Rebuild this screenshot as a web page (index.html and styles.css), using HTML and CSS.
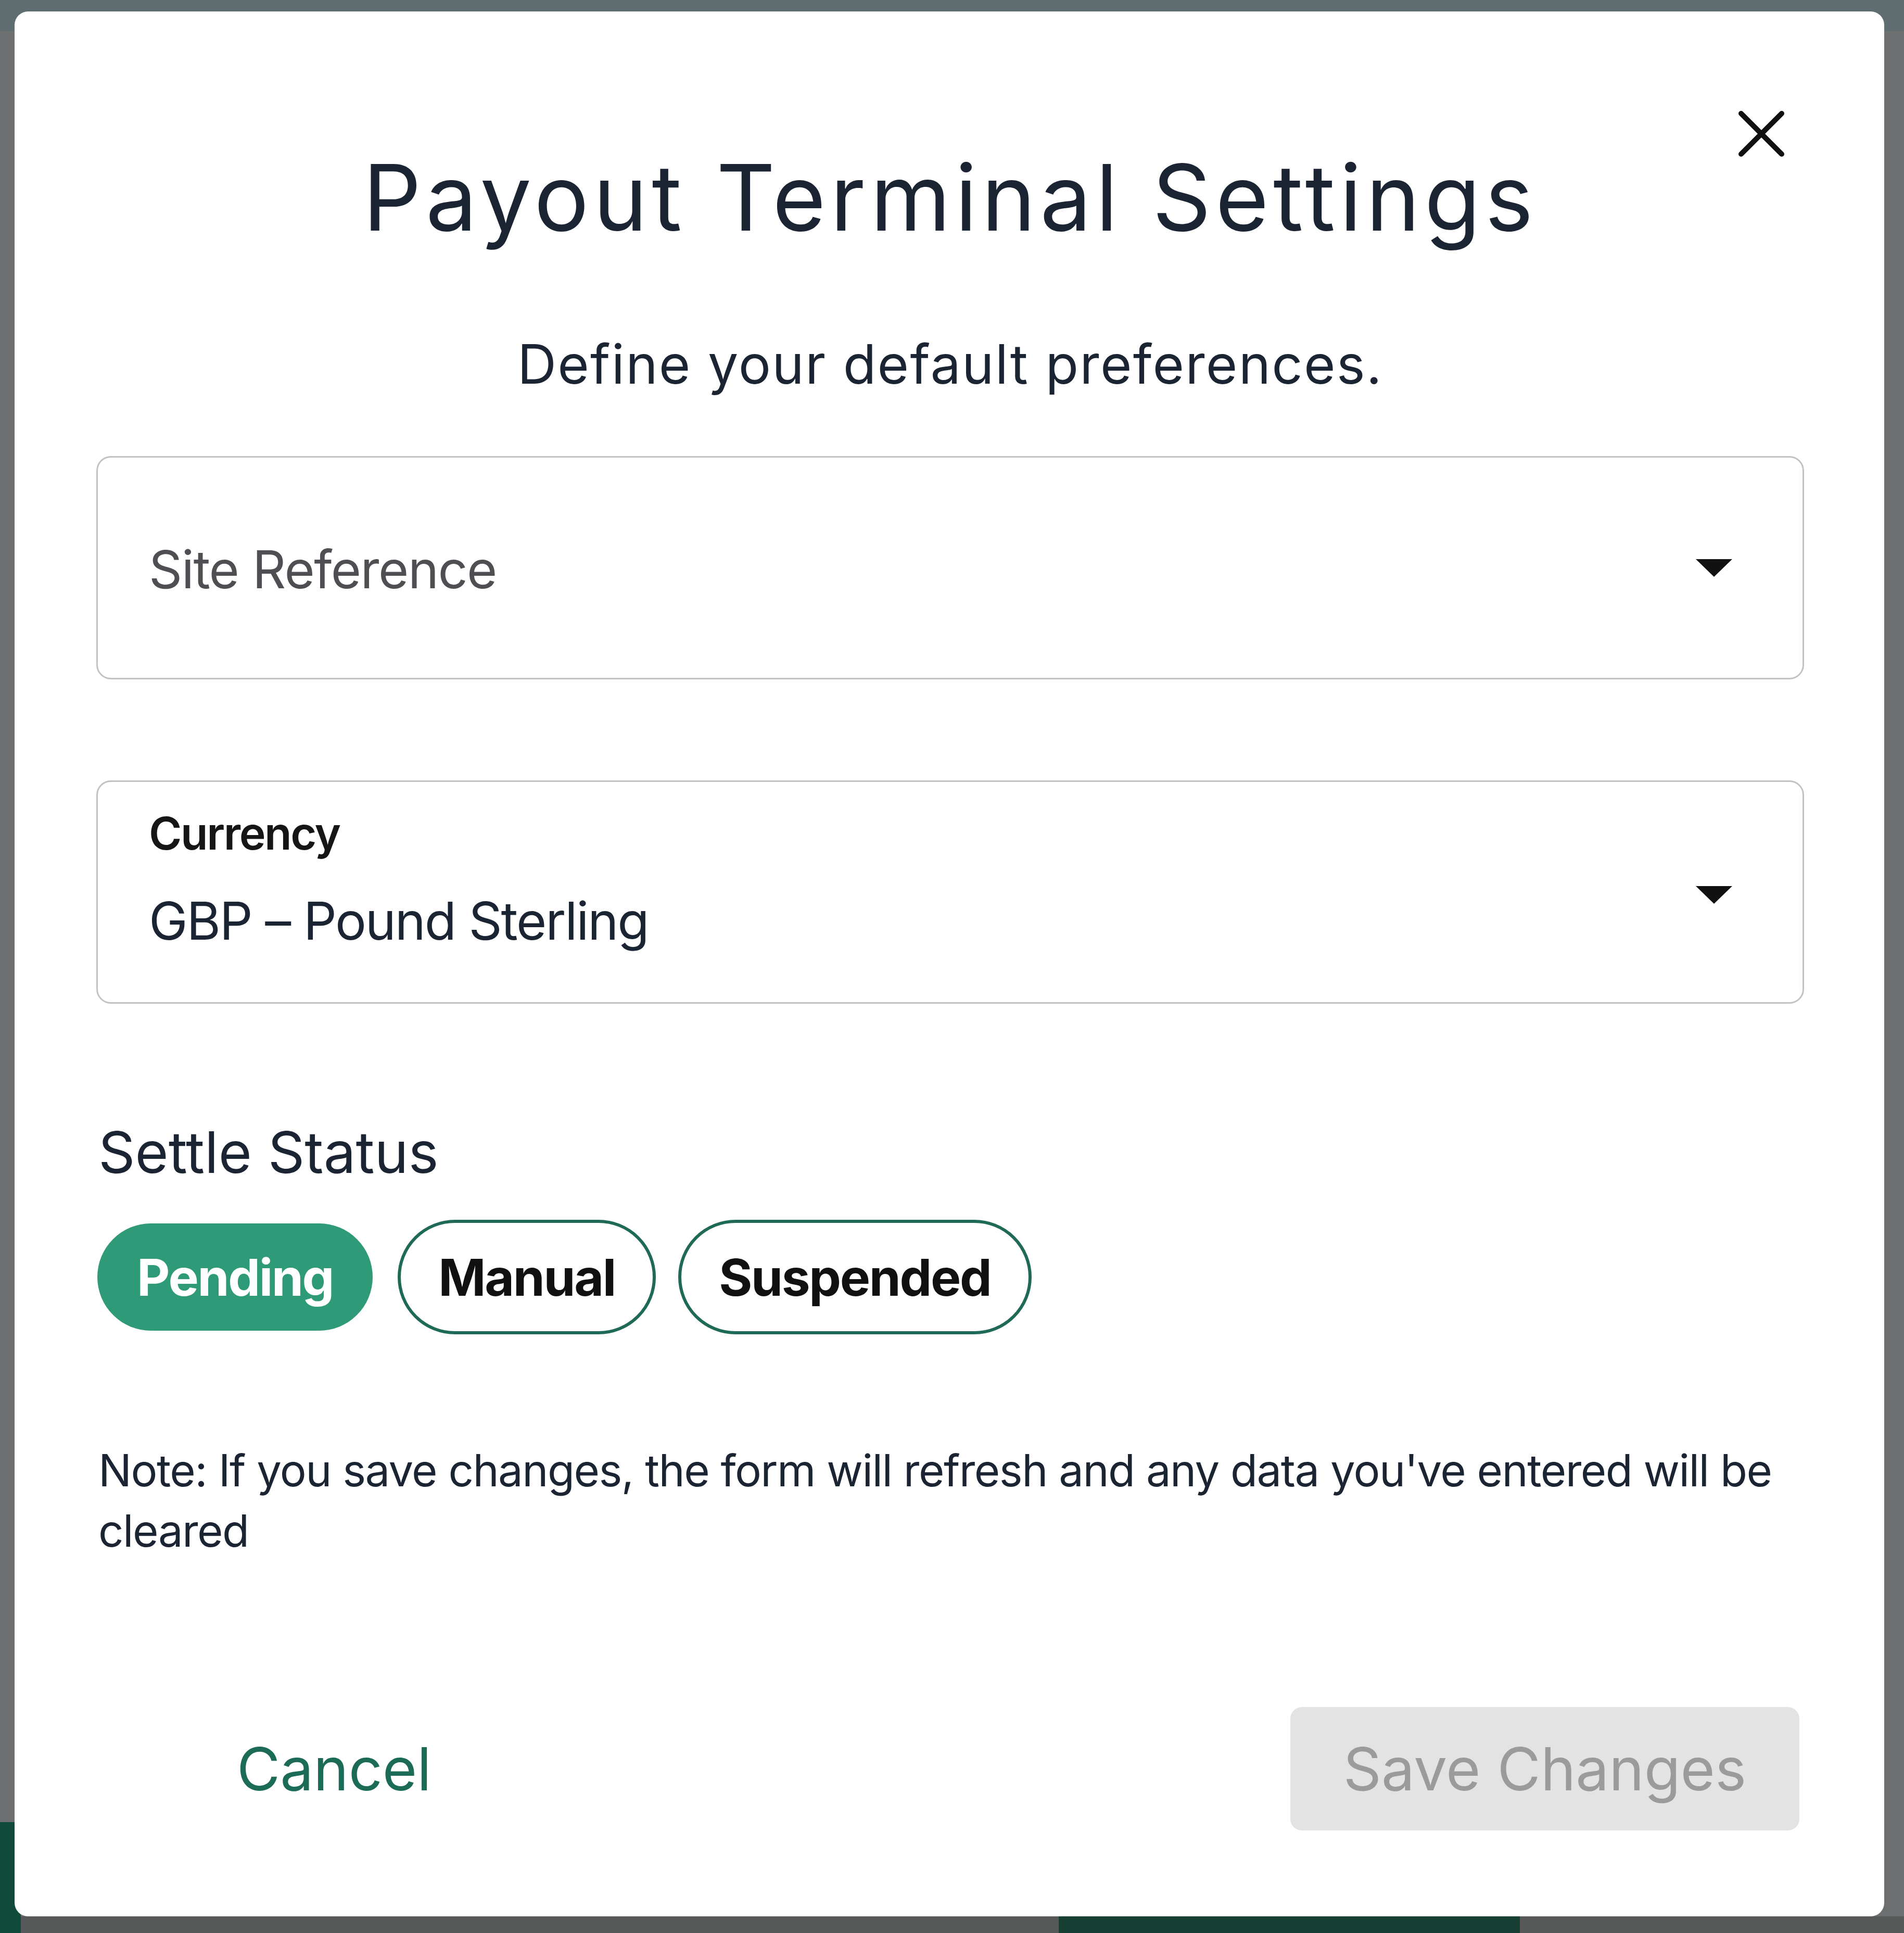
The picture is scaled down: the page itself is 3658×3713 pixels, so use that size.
FILE: index.html
```html
<!DOCTYPE html>
<html lang="en">
<head>
<meta charset="utf-8">
<title>Payout Terminal Settings</title>
<link rel="stylesheet" href="styles.css">
</head>
<body>
<div class="behind">
  <div class="behind-main"></div>
  <div class="behind-bottom">
    <div class="behind-green-left"></div>
    <div class="behind-gap"></div>
    <div class="behind-green-mid"></div>
  </div>
</div>

<div class="modal" role="dialog" aria-labelledby="dlg-title">
  <button class="close" aria-label="Close">
    <svg viewBox="0 0 88 88" width="88" height="88" aria-hidden="true">
      <path d="M5 5 L83 83 M83 5 L5 83" stroke="#111111" stroke-width="10" stroke-linecap="round" fill="none"/>
    </svg>
  </button>

  <h1 class="title" id="dlg-title">Payout Terminal Settings</h1>
  <p class="subtitle">Define your default preferences.</p>

  <div class="field field-empty">
    <span class="field-placeholder">Site Reference</span>
    <svg class="caret" viewBox="0 0 70 34" width="70" height="34" aria-hidden="true"><path d="M0 0 H70 L35 34 Z" fill="#111111"/></svg>
  </div>

  <div class="field field-filled">
    <div class="field-body">
      <span class="field-label">Currency</span>
      <span class="field-value">GBP &#8211; Pound Sterling</span>
    </div>
    <svg class="caret" viewBox="0 0 70 34" width="70" height="34" aria-hidden="true"><path d="M0 0 H70 L35 34 Z" fill="#111111"/></svg>
  </div>

  <div class="section-label">Settle Status</div>
  <div class="pills">
    <button class="pill pill-active">Pending</button>
    <button class="pill">Manual</button>
    <button class="pill pill-wide">Suspended</button>
  </div>

  <p class="note">Note: If you save changes, the form will refresh and any data you've entered will be cleared</p>

  <div class="footer">
    <button class="cancel">Cancel</button>
    <button class="save" disabled>Save Changes</button>
  </div>
</div>
</body>
</html>
```

FILE: styles.css
```css
html, body {
  margin: 0;
  padding: 0;
}

body {
  width: 3658px;
  height: 3713px;
  position: relative;
  overflow: hidden;
  background: #6c6e6f;
  font-family: Inter, "Noto Sans", "Liberation Sans", sans-serif;
}

/* dimmed page behind the dialog */
.behind {
  height: 3713px;
  display: grid;
  grid-template-rows: 1fr 213px;
  background: linear-gradient(#5f6c70 0, #5f6c70 60px, #6e6f70 60px);
}

.behind-bottom {
  display: flex;
  align-items: flex-end;
  background: linear-gradient(#6d6e6f 0, #6d6e6f 181px, #575858 181px);
}

.behind-green-left {
  width: 40px;
  height: 213px;
  background: #0f4a3a;
}

.behind-gap {
  width: 1994px;
}

.behind-green-mid {
  width: 886px;
  height: 32px;
  background: #173f33;
}

/* dialog */
.modal {
  position: absolute;
  left: 28px;
  top: 22px;
  width: 3592px;
  height: 3659px;
  box-sizing: border-box;
  background: #ffffff;
  border-radius: 26px;
  padding: 269px 154px 165px 157px;
  display: flex;
  flex-direction: column;
  color: #1b2432;
}

.close {
  position: absolute;
  left: 3312px;
  top: 191px;
  width: 88px;
  height: 88px;
  padding: 0;
  border: 0;
  background: transparent;
  display: block;
}

.close svg {
  display: block;
}

.title {
  margin: 0;
  font-size: 176px;
  line-height: 176px;
  font-weight: 400;
  text-align: center;
  color: #1b2432;
  letter-spacing: 8.3px;
}

.subtitle {
  margin: 180px 0 0;
  font-size: 104px;
  line-height: 104px;
  text-align: center;
  color: #1b2432;
  letter-spacing: 2.2px;
}

.field {
  box-sizing: border-box;
  height: 429px;
  border: 3px solid #c2c2c2;
  border-radius: 28px;
  display: flex;
  align-items: center;
  padding: 0 135px 0 98px;
}

.field-empty {
  margin-top: 125px;
}

.field-filled {
  margin-top: 194px;
  align-items: flex-start;
}

.field-placeholder {
  flex: 1;
  font-size: 100px;
  line-height: 100px;
  letter-spacing: -1.5px;
  color: #4d4f52;
  margin-top: 6px;
}

.field-body {
  flex: 1;
  display: flex;
  flex-direction: column;
  padding-top: 56px;
}

.field-label {
  font-size: 86px;
  line-height: 86px;
  font-weight: 600;
  letter-spacing: -2.4px;
  color: #161616;
}

.field-value {
  margin-top: 75px;
  font-size: 100px;
  line-height: 100px;
  letter-spacing: -2.2px;
  color: #1b2432;
}

.field-filled .caret {
  margin-top: 200px;
}

.caret {
  flex: none;
  display: block;
}

.section-label {
  margin-top: 230px;
  font-size: 110px;
  line-height: 110px;
  color: #1b2432;
  padding-left: 4px;
}

.pills {
  margin-top: 75px;
  display: flex;
  align-items: center;
  gap: 48px;
  padding-left: 2px;
}

.pill {
  box-sizing: border-box;
  height: 220px;
  padding: 0 72px;
  border: 6px solid #1f6a57;
  border-radius: 110px;
  background: #ffffff;
  font-family: inherit;
  font-size: 98px;
  font-weight: 700;
  letter-spacing: -2.3px;
  color: #111111;
}

.pill-wide {
  margin-left: -5px;
}

.pill-active {
  height: 206px;
  padding: 0 76px;
  border: 0;
  background: #2f9a78;
  color: #ffffff;
}

.note {
  margin: 204px 0 0;
  padding-left: 4px;
  font-size: 85px;
  line-height: 116px;
  letter-spacing: -1.55px;
  color: #1b2432;
}

.footer {
  margin-top: auto;
  display: flex;
  justify-content: space-between;
  align-items: center;
}

.cancel {
  margin-left: 270px;
  padding: 0;
  border: 0;
  background: transparent;
  font-family: inherit;
  font-size: 114px;
  color: #1c6b57;
}

.save {
  box-sizing: border-box;
  width: 978px;
  height: 237px;
  margin-right: 9px;
  border: 0;
  border-radius: 22px;
  background: #e3e3e3;
  font-family: inherit;
  font-size: 114px;
  color: #9b9b9b;
}
```
